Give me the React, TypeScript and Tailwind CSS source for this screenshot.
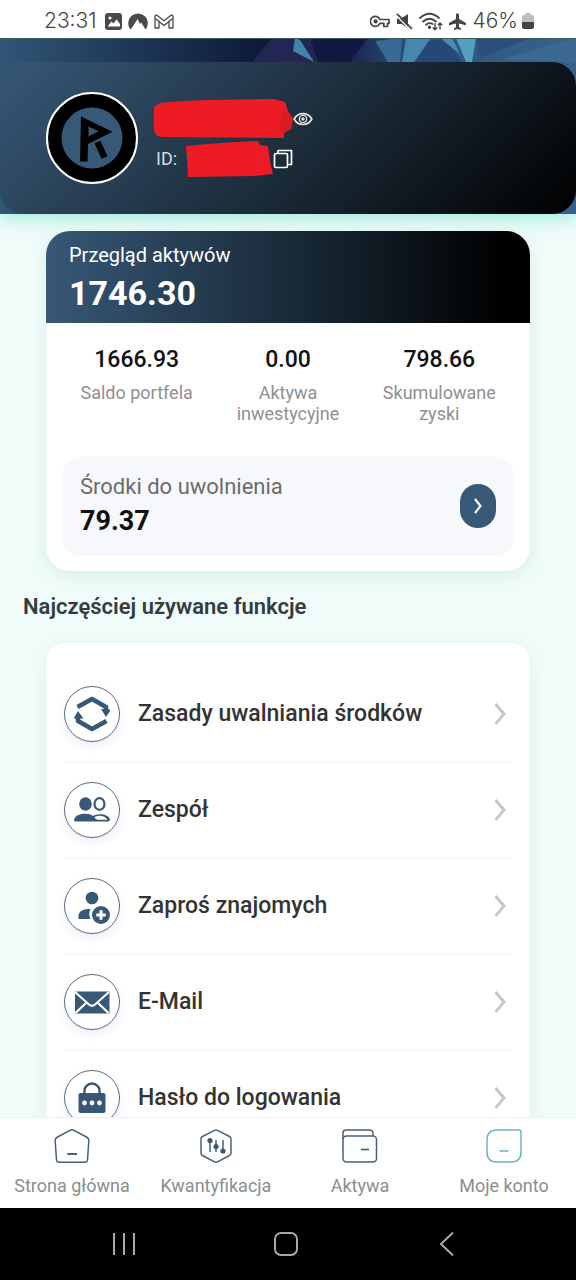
import type { ReactNode } from 'react'

const stats = [
  { value: '1666.93', label: 'Saldo portfela' },
  { value: '0.00', label: 'Aktywa inwestycyjne' },
  { value: '798.66', label: 'Skumulowane zyski' },
]

function StatusBar() {
  return (
    <div className="flex h-[38px] shrink-0 items-center justify-between bg-white pr-[42px] pl-11 pt-1 font-['Inter',sans-serif] text-[21px] font-light text-[#444]">
      <div className="flex items-center gap-1.5">
        <span className="pr-0.5">23:31</span>
        <svg className="h-[17px] w-[17px]" viewBox="0 0 17 17">
          <rect x="0" y="0" width="17" height="17" rx="3" fill="#4a4a4a" />
          <path d="M3 13 L6.5 8.5 L8.5 10.5 L11.5 6.5 L15 11 V13.5 H3 Z" fill="#fff" />
          <circle cx="5" cy="5" r="1.5" fill="#fff" />
        </svg>
        <svg className="h-[17px] w-5" viewBox="0 0 20 17">
          <path d="M2.5 16.5 A9.8 9.8 0 1 1 17.5 16.5 L13.2 9.5 L12 11 L9.6 6 L4.5 14 Z" fill="#4a4a4a" />
        </svg>
        <svg className="h-[15px] w-5" viewBox="0 0 20 15" fill="none" stroke="#4a4a4a" strokeWidth="1.3" strokeLinejoin="round">
          <path d="M1 14 V2.5 Q1 .8 3 1.3 L10 6.8 L17 1.3 Q19 .8 19 2.5 V14 H15 V7.5 L10 11.4 L5 7.5 V14 Z" />
          <path d="M5 7.5 L1.3 4.5 M15 7.5 L18.7 4.5" />
        </svg>
      </div>
      <div className="flex items-center gap-1.5">
        <svg className="h-[13px] w-5" viewBox="0 0 20 13" fill="none" stroke="#444" strokeWidth="1.7" strokeLinejoin="round">
          <path d="M10 4.5 H19 V8.3 H17.5 V11.5 H13.8 V8.3 H10 A5 5 0 1 1 10 4.5 Z" />
          <circle cx="5.6" cy="6.4" r="1.3" fill="#444" />
        </svg>
        <svg className="h-[17px] w-[17px]" viewBox="0 0 17 17">
          <path d="M1 5.5 H5 L12 1 V15 L5.5 11 H1 Z" fill="#444" />
          <path d="M0 2.5 L14.5 17" stroke="#fff" strokeWidth="1.2" />
          <path d="M1 .8 L16 15.8" stroke="#444" strokeWidth="1.8" />
        </svg>
        <svg className="h-[19px] w-6" viewBox="0 0 24 19" fill="none" stroke="#444" strokeWidth="1.8" strokeLinecap="round">
          <path d="M1 6 Q10.5 -2.5 20 6" />
          <path d="M4 9.5 Q10.5 4 17 9.5" />
          <path d="M7 12.7 Q10.5 10 13.5 12" />
          <circle cx="10.5" cy="15.2" r=".8" fill="#444" />
          <path d="M16 11.5 V17.5 M14 15.7 L16 17.7 L18 15.7 M21 17 V11 M19.3 12.7 L21 11 L22.8 12.7" strokeWidth="1.4" />
        </svg>
        <div className="flex items-center gap-1">
          <svg className="mr-0.5 h-[17px] w-[17px]" viewBox="0 0 17 17">
            <path d="M7 1.5 Q8.5 -1 10 1.5 V6 L17 10 V12.3 L10 10.5 V14 L12 15.5 V17 L8.5 16 L5 17 V15.5 L7 14 V10.5 L0 12.3 V10 L7 6 Z" fill="#444" />
          </svg>
          <span>46%</span>
          <svg className="h-4 w-3" viewBox="0 0 12 16">
            <path d="M3.5 0 H8.5 V2 H10 Q12 2 12 4 V9 H0 V4 Q0 2 2 2 H3.5 Z" fill="#bdbdbd" />
            <path d="M0 9 H12 V14 Q12 16 10 16 H2 Q0 16 0 14 Z" fill="#444" />
          </svg>
        </div>
      </div>
    </div>
  )
}

function Banner() {
  return (
    <svg className="absolute inset-0 h-full w-full" viewBox="0 0 576 176" preserveAspectRatio="none">
      <defs>
        <linearGradient id="sky" x1="0" x2="1">
          <stop offset="0" stopColor="#315675" />
          <stop offset=".25" stopColor="#1c3454" />
          <stop offset=".45" stopColor="#0f1a3a" />
          <stop offset=".6" stopColor="#16234c" />
          <stop offset=".72" stopColor="#2c5680" />
          <stop offset="1" stopColor="#35618a" />
        </linearGradient>
      </defs>
      <rect width="576" height="176" fill="url(#sky)" />
      <path d="M272 0 H330 L360 24 H252 Z" fill="#232552" />
      <path d="M310 0 H368 L350 24 H318 Z" fill="#111a3e" />
      <path d="M295 0 L300 2 L314 24 L293 13 Z" fill="#4384aa" />
      <path d="M375 3 L402 0 L400 24 H388 Z" fill="#376b95" />
      <path d="M406 1 H430 L414 24 H402 Z" fill="#4488af" />
      <path d="M428 4 L444 0 L462 24 H416 Z" fill="#264878" />
      <path d="M440 0 H452 L460 16 Z" fill="#498db2" />
      <path d="M456 0 H476 L472 24 H466 Z" fill="#559fc0" />
      <path d="M476 0 H530 L480 20 Z" fill="#2b4e7d" />
      <path d="M500 22 L560 4 L576 0 V24 Z" fill="#3c6991" />
      <path d="M0 .5 H576" stroke="#3f5562" />
    </svg>
  )
}

function Profile() {
  return (
    <header className="relative pt-6 shadow-[0_4px_16px_rgba(70,215,190,0.5)]">
      <Banner />
      <div className="relative flex items-center gap-4 rounded-3xl bg-[linear-gradient(135deg,#375877,#182632_60%,#000)] px-[46px] py-[30px]">
        <svg className="h-[92px] w-[92px]" viewBox="0 0 92 92">
          <circle cx="46" cy="46" r="45" fill="#000" stroke="#fff" strokeWidth="2" />
          <circle cx="46" cy="46" r="30.5" fill="#375877" />
          <path
            fillRule="evenodd"
            d="M35 24.5 L66.5 39.7 L42 52 L41.5 69.500 H34 Z M42.500 34.500 V44.500 L52.500 39.300 Z"
            fill="#000"
          />
          <path d="M51.5 50 L58.5 65.5" stroke="#000" strokeWidth="6.5" />
        </svg>
        <div className="flex grow flex-col gap-0.5">
          <div className="flex h-10 items-center">
            <svg className="h-10 w-[139px]" viewBox="0 0 139 40">
              <path d="M0 8 L6 4 L28 2 L55 1 L120 0 L131 3 L134 12 L139 20 L137 30 L130 34 V39 L8 38 L2 36 L0 31 Z" fill="#ed1c24" />
              <path d="M127 14 L134 12 L139 20 L137 30 L130 34 L126 30 Z" fill="#d81b22" />
            </svg>
            <button type="button" aria-label="Pokaż">
              <svg className="h-4 w-5" viewBox="0 0 20 16" fill="none" stroke="#e3e6e9">
                <path d="M1.2 8 C5 .7 15 .7 18.8 8 C15 15.3 5 15.3 1.2 8 Z" strokeWidth="1.7" />
                <circle cx="10" cy="8" r="3.6" strokeWidth="1.4" />
                <circle cx="10" cy="8" r="1.2" fill="#e3e6e9" />
              </svg>
            </button>
          </div>
          <div className="flex h-9 items-center text-lg text-[#d5dbe0]">
            <span className="w-8 pl-[2px]">ID:</span>
            <svg className="h-9 w-[87px]" viewBox="0 0 87 36">
              <path d="M0 5 L22 3 L50 1 L72 0 L74 4 L82 5 L84 20 L87 33 L68 35 L2 36 L1 18 Z" fill="#ed1c24" />
              <path d="M75 14 V24" stroke="#d42a30" strokeWidth="2" />
            </svg>
            <button type="button" aria-label="Kopiuj">
              <svg className="h-5 w-5" viewBox="0 0 20 20" fill="none" stroke="#fff" strokeWidth="1.7" strokeLinejoin="round">
                <rect x="1.5" y="4.5" width="13" height="14" rx="1.5" />
                <path d="M5 4.5 V1.5 H18.5 V15.5 H14.5" />
              </svg>
            </button>
          </div>
        </div>
      </div>
    </header>
  )
}

function Assets() {
  return (
    <section className="relative mx-[46px] mt-[17px] overflow-hidden rounded-3xl bg-white shadow-[0_4px_18px_rgba(60,130,110,0.12)]">
      <div className="bg-linear-to-r/srgb from-[#375877] via-[#172633] via-55% to-black to-95% px-[23px] pt-[10px] pb-1.5 text-white">
        <h1 className="text-xl leading-7">Przegląd aktywów</h1>
        <p className="text-[34px] leading-12 font-bold">1746.30</p>
      </div>
      <div className="grid grid-cols-3 px-[15px] pt-[23px] text-center">
        {stats.map((s) => (
          <div key={s.label}>
            <div className="text-[23px] leading-7 font-medium text-[#111]">{s.value}</div>
            <div className="mx-auto mt-2 max-w-[120px] text-lg leading-[21px] text-[#909090]">{s.label}</div>
          </div>
        ))}
      </div>
      <div className="mx-4 mt-8 mb-[15px] flex h-[100px] items-center justify-between rounded-[20px] bg-[#f7f8fb] px-[18px]">
        <div className="pt-0.5">
          <div className="text-[22px] leading-7 text-[#6b6b6b]">Środki do uwolnienia</div>
          <div className="text-[27px] leading-10 font-bold text-[#111]">79.37</div>
        </div>
        <button type="button" aria-label="Środki do uwolnienia" className="flex h-11 w-9 items-center justify-center rounded-full bg-[#375877]">
          <svg className="h-4 w-2" viewBox="0 0 8 16" fill="none" stroke="#fff" strokeWidth="2.2">
            <path d="M1 1 L6.5 8 L1 15" />
          </svg>
        </button>
      </div>
    </section>
  )
}

function MenuRow({ label, children }: { label: string; children: ReactNode }) {
  return (
    <li className="border-b-2 border-[#f5f6f7] last:border-0">
      <a href="#" className="flex h-[94px] items-center">
        <span className="flex h-14 w-14 items-center justify-center rounded-full border border-[#5a6b7f] bg-white shadow-[0_4px_10px_rgba(55,88,160,0.1)]">
          <svg className="h-9 w-9" viewBox="0 0 36 36" fill="#375877">
            {children}
          </svg>
        </span>
        <span className="grow pl-[18px] text-[23px] font-medium text-[#333]">{label}</span>
        <svg className="mr-1.5 h-[22px] w-3" viewBox="0 0 12 22" fill="none" stroke="#c6c6c6" strokeWidth="2.8">
          <path d="M1.5 1 L10 11 L1.5 21" />
        </svg>
      </a>
    </li>
  )
}

function Menu() {
  return (
    <section>
      <h2 className="mx-[23px] mt-[22px] text-[22px] leading-7 font-semibold text-[#333d3d]">Najczęściej używane funkcje</h2>
      <ul className="mx-[46px] mt-[22px] rounded-[20px] bg-white px-[18px] pt-6 shadow-[0_4px_18px_rgba(60,130,110,0.1)]">
        <MenuRow label="Zasady uwalniania środków">
          <g fill="none" stroke="#375877" strokeWidth="4.6">
            <path d="M3.5 11 L18 3 L32 11 V15" strokeLinejoin="round" />
            <path d="M32.5 25 L18 33 L4 25 V21" strokeLinejoin="round" />
          </g>
          <path d="M27 13 L37 13.5 L32 21 Z M-.5 22.5 L4 15 L9.5 22.5 Z" />
        </MenuRow>
        <MenuRow label="Zespół">
          <ellipse cx="11.5" cy="12" rx="6.3" ry="6.8" />
          <ellipse cx="25.5" cy="12" rx="5" ry="5.8" fill="none" stroke="#375877" strokeWidth="2.2" />
          <path d="M0 28 C1 23 7 21.7 11 21.7 C15 21.7 17 22.5 19 24 C22 21.7 34 20.5 36 27.5 Q36 29.5 34 29.5 H2 Q0 29.5 0 28 Z" />
          <path d="M20.5 25 C25 22.5 31 23.5 33.5 27.7 H24 Q21 27.5 20.5 25 Z" fill="#fff" />
        </MenuRow>
        <MenuRow label="Zaproś znajomych">
          <circle cx="18" cy="10" r="6.3" />
          <path d="M4.5 31 V28 C5 22.5 10 21 16.5 21 C14.8 24 14.8 28 16.5 31 Z" />
          <circle cx="27" cy="27" r="9" />
          <path d="M27 22.3 V31.7 M22.3 27 H31.7" stroke="#fff" strokeWidth="3" />
        </MenuRow>
        <MenuRow label="E-Mail">
          <rect x="1" y="7.5" width="34.5" height="22" />
          <path d="M1 8 L15 20.5 Q18 23 21 20.5 L35 8 M1.5 29 L12.5 18.5 M34.5 29 L23.5 18.5" fill="none" stroke="#fff" strokeWidth="2.2" />
        </MenuRow>
        <MenuRow label="Hasło do logowania">
          <rect x="4.5" y="13" width="27" height="20" rx="2" />
          <path d="M10.5 14 V11 A7.5 7.5 0 0 1 25.5 11 V14" fill="none" stroke="#375877" strokeWidth="2.4" />
          <g fill="#fff">
            <circle cx="10.5" cy="23" r="2.4" />
            <circle cx="18" cy="23" r="2.4" />
            <circle cx="25.5" cy="23" r="2.4" />
          </g>
        </MenuRow>
      </ul>
    </section>
  )
}

function Tab({ label, color = '#4a6076', children }: { label: string; color?: string; children: ReactNode }) {
  return (
    <a href="#" className="flex flex-col items-center gap-[11px]">
      <svg className="h-[34px] w-9" viewBox="0 0 36 34" fill="none" stroke={color} strokeWidth="1.5" strokeLinejoin="round">
        {children}
      </svg>
      <span className="text-lg leading-6 whitespace-nowrap text-[#8a8e90]">{label}</span>
    </a>
  )
}

function TabBar() {
  return (
    <nav className="grid shrink-0 grid-cols-4 border-t border-[#e2f1f3] bg-white pt-[11px] pb-[10px]">
      <Tab label="Strona główna">
        <path d="M16 1.3 Q18 .3 20 1.3 L32.5 8 Q35 9.3 34.8 12 L33.5 31 Q33.3 33.3 31 33.3 H5 Q2.7 33.3 2.5 31 L1.2 12 Q1 9.3 3.5 8 Z" />
        <path d="M13.3 25 H23" strokeWidth="2" />
      </Tab>
      <Tab label="Kwantyfikacja">
        <path d="M16.5 1.4 Q18 .5 19.5 1.4 L31.5 7.5 Q33 8.3 33 10 V24 Q33 25.7 31.5 26.5 L19.5 32.8 Q18 33.6 16.5 32.8 L4.5 26.5 Q3 25.7 3 24 V10 Q3 8.3 4.5 7.5 Z" />
        <path d="M12 11 V23 M18 11 V23 M25 11 V23" />
        <g fill="#3f566d" stroke="none">
          <circle cx="12" cy="11.5" r="2.6" />
          <circle cx="18" cy="17.5" r="2.6" />
          <circle cx="25" cy="22" r="2.6" />
        </g>
      </Tab>
      <Tab label="Aktywa">
        <rect x="1" y="7" width="33.5" height="26" rx="3.5" />
        <path d="M1 10 V4 Q1 1 4 1 H27 Q31 1 31 4 V7" />
        <path d="M19 20.5 H27" strokeWidth="1.7" />
      </Tab>
      <Tab label="Moje konto" color="#6bb5c8">
        <path d="M11 1 H33 Q35 1 35 3 V23 Q35 33 25 33 H11 Q1 33 1 23 V11 Q1 1 11 1 Z" />
        <path d="M13.5 22 H22.5" />
      </Tab>
    </nav>
  )
}

function SystemNav() {
  return (
    <div className="flex h-[72px] shrink-0 items-center justify-between bg-black pr-[117px] pl-28 text-[#a9a9a9]">
      <button type="button" aria-label="Ostatnie">
        <svg className="h-6 w-6" viewBox="0 0 24 24" fill="none" stroke="currentColor" strokeWidth="2">
          <path d="M2 1 V23 M12 1 V23 M22 1 V23" />
        </svg>
      </button>
      <button type="button" aria-label="Ekran główny">
        <svg className="h-6 w-6" viewBox="0 0 24 24" fill="none" stroke="currentColor" strokeWidth="2">
          <rect x="1" y="1" width="22" height="22" rx="6" />
        </svg>
      </button>
      <button type="button" aria-label="Wstecz">
        <svg className="h-6 w-6" viewBox="0 0 24 24" fill="none" stroke="currentColor" strokeWidth="2">
          <path d="M18 .5 L6 12 L18 23.5" />
        </svg>
      </button>
    </div>
  )
}

export default function App() {
  return (
    <div className="flex h-screen flex-col bg-[#f0fcfa] font-[Roboto,sans-serif]">
      <StatusBar />
      <main className="min-h-0 flex-1 overflow-hidden">
        <Profile />
        <Assets />
        <Menu />
      </main>
      <TabBar />
      <SystemNav />
    </div>
  )
}
